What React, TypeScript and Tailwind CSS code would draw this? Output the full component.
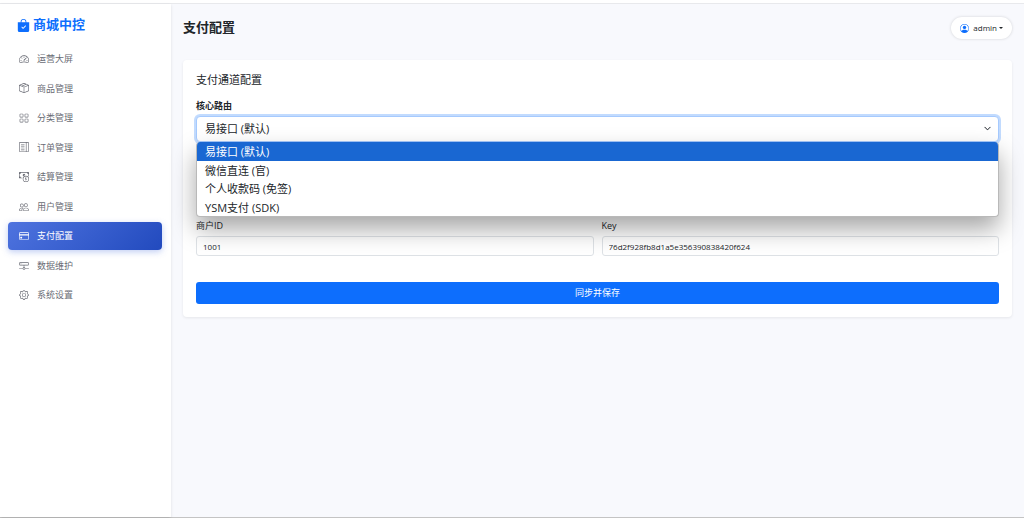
import { useState } from 'react';
import type { ReactNode } from 'react';
import type { IconType } from 'react-icons';
import {
  BsBagCheckFill,
  BsBoxSeam,
  BsCashCoin,
  BsChevronDown,
  BsCreditCard,
  BsGear,
  BsGrid,
  BsHddNetwork,
  BsLayoutTextSidebar,
  BsPeople,
  BsPersonCircle,
  BsSpeedometer2,
} from 'react-icons/bs';
import { clsx } from 'clsx';

const navItems: { label: string; icon: IconType }[] = [
  { label: '运营大屏', icon: BsSpeedometer2 },
  { label: '商品管理', icon: BsBoxSeam },
  { label: '分类管理', icon: BsGrid },
  { label: '订单管理', icon: BsLayoutTextSidebar },
  { label: '结算管理', icon: BsCashCoin },
  { label: '用户管理', icon: BsPeople },
  { label: '支付配置', icon: BsCreditCard },
  { label: '数据维护', icon: BsHddNetwork },
  { label: '系统设置', icon: BsGear },
];

const routes = [
  { value: 'yi', label: '易接口 (默认)' },
  { value: 'wechat', label: '微信直连 (官)' },
  { value: 'personal', label: '个人收款码 (免签)' },
  { value: 'ysm', label: 'YSM支付 (SDK)' },
];

function Sidebar({ active }: { active: string }) {
  return (
    <aside className="w-[171px] shrink-0 bg-white px-2 pt-[9px] shadow-sm">
      <a href="#" className="flex h-6 items-center gap-[3px] pl-[9px] text-[13px] font-bold text-[#0d6efd]">
        <BsBagCheckFill className="size-[13px]" />
        商城中控
      </a>
      <nav className="mt-2 grid h-[264px] auto-rows-fr gap-[2px] pr-[1px]">
        {navItems.map(({ label, icon: Icon }) => (
          <a
            key={label}
            href="#"
            className={clsx(
              'flex items-center gap-2 rounded pl-[11px] text-[9px]',
              label === active
                ? 'bg-linear-135 from-[#4e73df] to-[#224abe] text-white shadow-[0_2px_6px_rgba(78,115,223,0.35)]'
                : 'text-[#6a6c75]'
            )}
          >
            <Icon className="size-[10px]" />
            {label}
          </a>
        ))}
      </nav>
    </aside>
  );
}

function RouteSelect({ value, onChange }: { value: string; onChange: (v: string) => void }) {
  return (
    <div className="relative">
      <select
        id="route"
        value={value}
        onChange={e => onChange(e.target.value)}
        className="block h-[26px] w-full appearance-none rounded border border-[#a6cafe] bg-white px-2 text-[11px] text-[#212529] shadow-[0_0_0_2px_rgba(13,110,253,0.25)] outline-none"
      >
        {routes.map(r => (
          <option key={r.value} value={r.value}>
            {r.label}
          </option>
        ))}
      </select>
      <BsChevronDown
        strokeWidth={1}
        className="pointer-events-none absolute top-[9px] right-2 size-[7px] text-[#343a40]"
      />
      <ul
        role="listbox"
        aria-label="核心路由"
        className="absolute inset-x-0 top-full z-10 grid h-[75px] auto-rows-fr overflow-hidden rounded border border-t-0 border-[#b9b9b9] bg-white text-[11px] text-[#212529] shadow-[0_12px_24px_rgba(0,0,0,0.35)]"
      >
        {routes.map(r => (
          <li
            key={r.value}
            role="option"
            aria-selected={r.value === value}
            onClick={() => onChange(r.value)}
            className={clsx('flex items-center px-2 pt-[2px]', r.value === value && 'bg-[#1967d2] text-white')}
          >
            {r.label}
          </li>
        ))}
      </ul>
    </div>
  );
}

function Field({ id, label, defaultValue }: { id: string; label: string; defaultValue: string }) {
  return (
    <div>
      <label htmlFor={id} className="mb-1 block text-[9px] leading-[13px]">
        {label}
      </label>
      <input
        id={id}
        defaultValue={defaultValue}
        className="block h-5 w-full rounded-[3px] border border-[#dee2e6] bg-white px-[6px] text-[8px] text-[#212529] outline-none"
      />
    </div>
  );
}

function Card({ title, children }: { title: string; children: ReactNode }) {
  return (
    <section className="mt-5 rounded bg-white p-[13px] shadow-[0_1px_3px_rgba(0,0,0,0.08)]">
      <h2 className="text-[11px] leading-[14px]">{title}</h2>
      {children}
    </section>
  );
}

export default function App() {
  const [route, setRoute] = useState('yi');

  return (
    <div className="flex min-h-screen flex-col border-b border-[#c4c4c4] bg-[#f8f9fd] font-['Open_Sans','Noto_Sans_CJK_SC',sans-serif] text-[#212529]">
      <div className="h-1 border-b border-[#e8e9ec] bg-white" />
      <div className="flex flex-1">
        <Sidebar active="支付配置" />
        <main className="min-w-0 flex-1 px-3 pt-3">
          <header className="flex h-6 items-center justify-between">
            <h1 className="text-[13px] font-bold">支付配置</h1>
            <button
              type="button"
              className="flex h-[22px] items-center rounded-full bg-white px-[9px] text-[8px] shadow-[0_0_3px_rgba(0,0,0,0.16)]"
            >
              <BsPersonCircle className="mr-1 size-[9px] text-[#0d6efd]" />
              admin
              <span className="ml-[2px] border-x-2 border-t-2 border-x-transparent border-t-current" />
            </button>
          </header>
          <Card title="支付通道配置">
            <form onSubmit={e => e.preventDefault()}>
              <label htmlFor="route" className="mt-3 mb-1 block text-[9px] leading-[13px] font-bold">
                核心路由
              </label>
              <RouteSelect value={route} onChange={setRoute} />
              <div className="mt-[77px] grid grid-cols-2 gap-2">
                <Field id="merchant" label="商户ID" defaultValue="1001" />
                <Field id="key" label="Key" defaultValue="76d2f928fb8d1a5e356390838420f624" />
              </div>
              <button
                type="submit"
                className="mt-[26px] block h-[22px] w-full rounded-[3px] bg-[#0d6efd] text-[9px] text-white"
              >
                同步并保存
              </button>
            </form>
          </Card>
        </main>
      </div>
    </div>
  );
}
